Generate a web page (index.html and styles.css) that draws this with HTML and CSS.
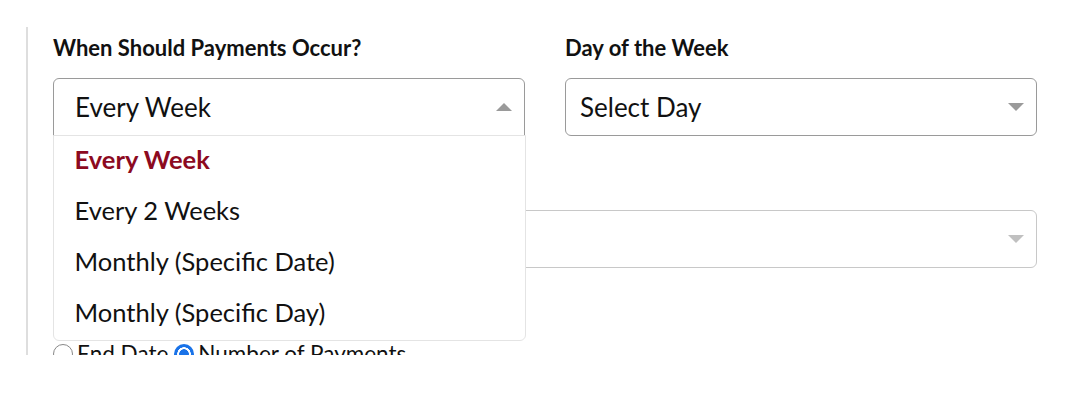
FILE: index.html
```html
<!DOCTYPE html>
<html>
<head>
<meta charset="utf-8">
<link rel="stylesheet" href="styles.css">
</head>
<body>
<div class="panel">
  <div class="row two">
    <div class="field">
      <div class="label">When Should Payments Occur?</div>
      <div class="select open">
        <span class="value">Every Week</span>
        <span class="caret up"></span>
        <ul class="menu">
          <li class="selected">Every Week</li>
          <li>Every 2 Weeks</li>
          <li>Monthly (Specific Date)</li>
          <li>Monthly (Specific Day)</li>
        </ul>
      </div>
    </div>
    <div class="field">
      <div class="label">Day of the Week</div>
      <div class="select">
        <span class="value">Select Day</span>
        <span class="caret"></span>
      </div>
    </div>
  </div>
  <div class="row">
    <div class="field">
      <div class="label">Payment Start Date</div>
      <div class="select disabled">
        <span class="value"></span>
        <span class="caret"></span>
      </div>
    </div>
  </div>
  <div class="radios">
    <label class="radio"><span class="dot"></span>End Date</label>
    <label class="radio"><span class="dot checked"></span>Number of Payments</label>
  </div>
</div>
</body>
</html>
```

FILE: styles.css
```css
html, body {
  margin: 0;
  padding: 0;
  background: #fff;
}
body {
  font-family: Lato, "Liberation Sans", sans-serif;
  color: #111;
}
.panel {
  margin: 27px 0 0 26px;
  border-left: 2px solid #dedede;
  padding: 8px 28px 0 25px;
  height: 328px;
  overflow: hidden;
  box-sizing: border-box;
}
.row {
  display: grid;
  grid-template-columns: 1fr;
}
.row.two {
  grid-template-columns: 1fr 1fr;
  column-gap: 40px;
}
.label {
  font-size: 22px;
  font-weight: 700;
  line-height: 26px;
  height: 26px;
  margin-bottom: 17px;
}
.select {
  position: relative;
  height: 58px;
  border: 1.5px solid #9a9a9a;
  border-radius: 6px;
  box-sizing: border-box;
  display: flex;
  align-items: center;
  padding: 0 12px 0 14px;
  font-size: 26px;
}
.select .value {
  flex: 1;
}
.select.open {
  border-radius: 6px 6px 0 0;
  padding-left: 21px;
  z-index: 2;
}
.select.disabled {
  border-color: #c8c8c8;
}
.row + .row {
  margin-top: 31px;
}
.row + .row .label {
  visibility: hidden;
}
.caret {
  width: 0;
  height: 0;
  border-left: 8px solid transparent;
  border-right: 8px solid transparent;
  border-top: 8px solid #9a9a9a;
}
.caret.up {
  border-top: 0;
  border-bottom: 8px solid #9a9a9a;
}
.select.disabled .caret {
  border-top-color: #c0c0c0;
}
.menu {
  position: absolute;
  left: -1.5px;
  right: -1.5px;
  top: 56px;
  margin: 0;
  padding: 0;
  list-style: none;
  background: #fff;
  border: 1.5px solid #e4e4e4;
  border-radius: 0 0 6px 6px;
}
.menu li {
  height: 51px;
  line-height: 47px;
  padding: 0 0 4px 21px;
  box-sizing: border-box;
  font-size: 25.5px;
}
.menu li.selected {
  color: #8c0a1f;
  font-weight: 700;
}
.radios {
  display: flex;
  gap: 6px;
  margin-top: 72px;
  font-size: 22.5px;
  line-height: 28px;
}
.radio {
  display: flex;
  align-items: center;
  gap: 4px;
}
.dot {
  width: 20px;
  height: 20px;
  border: 1.5px solid #888;
  border-radius: 50%;
  box-sizing: border-box;
  display: inline-block;
}
.dot.checked {
  border: none;
  background: radial-gradient(circle, #1a73e8 0 4.5px, #fff 5px 6.5px, #1a73e8 7px);
}
```
